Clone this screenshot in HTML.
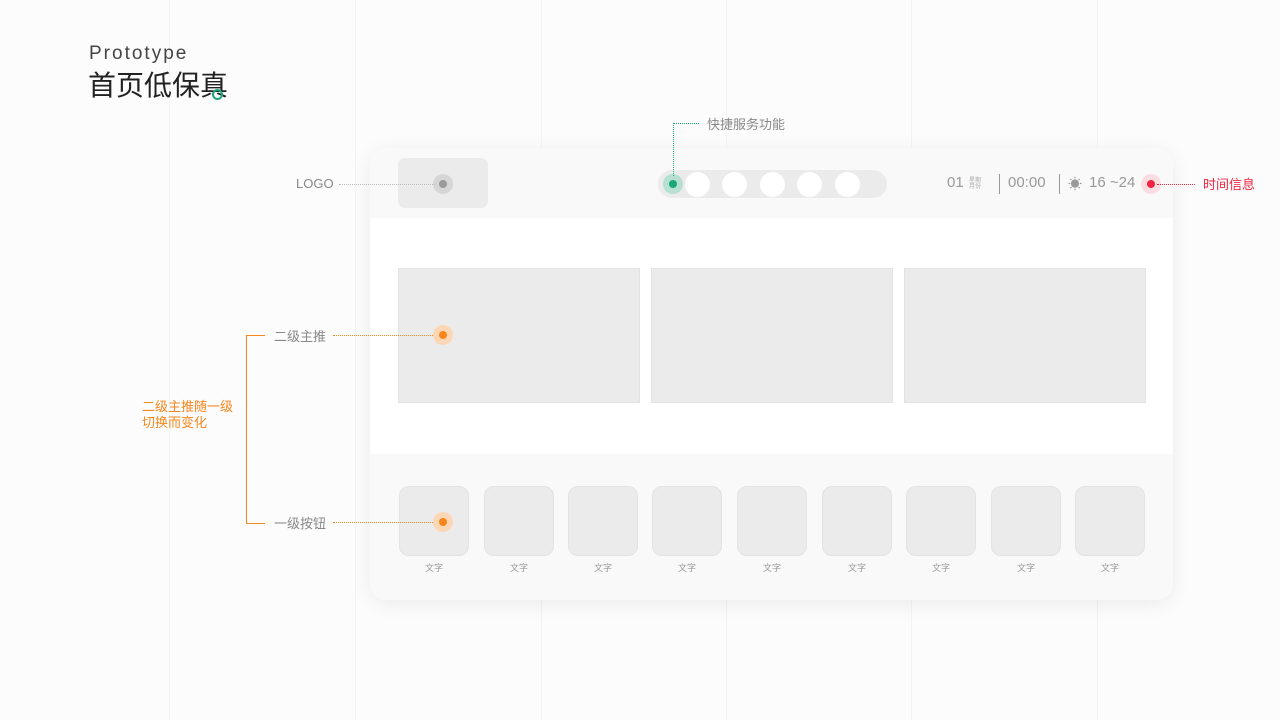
<!DOCTYPE html>
<html><head><meta charset="utf-8"><style>
body{margin:0;width:1280px;height:720px;background:#fcfcfc;position:relative;overflow:hidden;font-family:"Liberation Sans","Noto Sans CJK SC",sans-serif}
.a{position:absolute}
.vl{position:absolute;top:0;height:720px;width:1px;background:#f3f3f3}
.t{font-size:13px;color:#888;position:absolute;white-space:nowrap}
.ban{position:absolute;top:268px;width:242px;height:135px;background:#ebebeb;border:1px solid #e3e3e3;box-sizing:border-box}
.btn{position:absolute;top:486px;width:70px;height:70px;border-radius:10px;background:#ebebeb;border:1px solid #e3e3e3;box-sizing:border-box}
.lb{position:absolute;top:561px;font-size:9px;color:#999;width:70px;text-align:center}
.wc{position:absolute;top:172px;width:25px;height:25px;border-radius:50%;background:#fff}
</style></head><body>
<div class="vl" style="left:169px"></div><div class="vl" style="left:355px"></div><div class="vl" style="left:541px"></div><div class="vl" style="left:726px"></div><div class="vl" style="left:911px"></div><div class="vl" style="left:1097px"></div>
<div class="a" style="left:89px;top:43px;font-size:19px;letter-spacing:2px;color:#444">Prototype</div>
<div class="a" style="left:88px;top:64px;font-size:28px;color:#222">首页低保真</div>
<div class="a" style="left:212px;top:89px;width:7px;height:7px;border:2px solid #1aa57a;border-radius:50%"></div>

<div class="a" style="left:370px;top:148px;width:803px;height:452px;border-radius:16px;background:#fff;box-shadow:0 4px 20px rgba(0,0,0,.07);overflow:hidden">
<div class="a" style="left:0;top:0;width:803px;height:70px;background:#f9f9f9"></div>
<div class="a" style="left:0;top:306px;width:803px;height:146px;background:#f9f9f9"></div>
</div>
<div class="a" style="left:398px;top:158px;width:90px;height:50px;border-radius:7px;background:#ebebeb"></div>
<div class="a" style="left:433px;top:174px;width:20px;height:20px;border-radius:50%;background:#d6d6d6"></div>
<div class="a" style="left:439px;top:180px;width:8px;height:8px;border-radius:50%;background:#999"></div>
<div class="t" style="left:296px;top:176px">LOGO</div>
<div class="a" style="left:339px;top:184px;width:96px;border-top:1px dotted #bbb"></div>

<div class="a" style="left:658px;top:170px;width:229px;height:28px;border-radius:14px;background:#ebebeb"></div>
<div class="a" style="left:663px;top:174px;width:20px;height:20px;border-radius:50%;background:#b5e0d2"></div>
<div class="a" style="left:669px;top:180px;width:8px;height:8px;border-radius:50%;background:#1aa57a"></div>
<div class="wc" style="left:685px"></div><div class="wc" style="left:722px"></div><div class="wc" style="left:760px"></div><div class="wc" style="left:797px"></div><div class="wc" style="left:835px"></div>
<div class="a" style="left:673px;top:123px;height:53px;border-left:1px dotted #1aa57a"></div>
<div class="a" style="left:673px;top:123px;width:26px;border-top:1px dotted #1aa57a"></div>
<div class="t" style="left:707px;top:114px">快捷服务功能</div>

<div class="a" style="left:947px;top:174px;font-size:15px;color:#999">01</div>
<div class="a" style="left:969px;top:178px;font-size:6px;line-height:6px;color:#aaa">星期<br>月份</div>
<div class="a" style="left:999px;top:174px;width:1px;height:20px;background:#999"></div>
<div class="a" style="left:1008px;top:174px;font-size:15px;color:#999">00:00</div>
<div class="a" style="left:1059px;top:174px;width:1px;height:20px;background:#999"></div>
<div class="a" style="left:1068px;top:174px;font-size:14px;color:#999">☀</div>
<div class="a" style="left:1089px;top:174px;font-size:15px;color:#999">16 ~24</div>
<div class="a" style="left:1141px;top:174px;width:20px;height:20px;border-radius:50%;background:#fbdde1"></div>
<div class="a" style="left:1147px;top:180px;width:8px;height:8px;border-radius:50%;background:#f0243f"></div>
<div class="a" style="left:1157px;top:184px;width:38px;border-top:1px dotted #f0243f"></div>
<div class="t" style="left:1203px;top:174px;color:#f0243f">时间信息</div>

<div class="ban" style="left:398px"></div><div class="ban" style="left:651px"></div><div class="ban" style="left:904px"></div>
<div class="a" style="left:433px;top:325px;width:20px;height:20px;border-radius:50%;background:#fbd7b5"></div>
<div class="a" style="left:439px;top:331px;width:8px;height:8px;border-radius:50%;background:#f7861c"></div>
<div class="a" style="left:333px;top:335px;width:100px;border-top:1px dotted #f7861c"></div>
<div class="t" style="left:274px;top:326px">二级主推</div>

<div class="btn" style="left:399px"></div><div class="btn" style="left:484px"></div><div class="btn" style="left:568px"></div><div class="btn" style="left:652px"></div><div class="btn" style="left:737px"></div><div class="btn" style="left:822px"></div><div class="btn" style="left:906px"></div><div class="btn" style="left:991px"></div><div class="btn" style="left:1075px"></div>
<div class="lb" style="left:399px">文字</div><div class="lb" style="left:484px">文字</div><div class="lb" style="left:568px">文字</div><div class="lb" style="left:652px">文字</div><div class="lb" style="left:737px">文字</div><div class="lb" style="left:822px">文字</div><div class="lb" style="left:906px">文字</div><div class="lb" style="left:991px">文字</div><div class="lb" style="left:1075px">文字</div>
<div class="a" style="left:433px;top:512px;width:20px;height:20px;border-radius:50%;background:#fbd7b5"></div>
<div class="a" style="left:439px;top:518px;width:8px;height:8px;border-radius:50%;background:#f7861c"></div>
<div class="a" style="left:333px;top:522px;width:100px;border-top:1px dotted #f7861c"></div>
<div class="t" style="left:274px;top:513px">一级按钮</div>

<div class="a" style="left:246px;top:335px;width:18px;height:187px;border:1px solid #f7861c;border-right:none"></div>
<div class="a" style="left:142px;top:399px;font-size:13px;line-height:16px;color:#f7861c">二级主推随一级<br>切换而变化</div>
</body></html>
